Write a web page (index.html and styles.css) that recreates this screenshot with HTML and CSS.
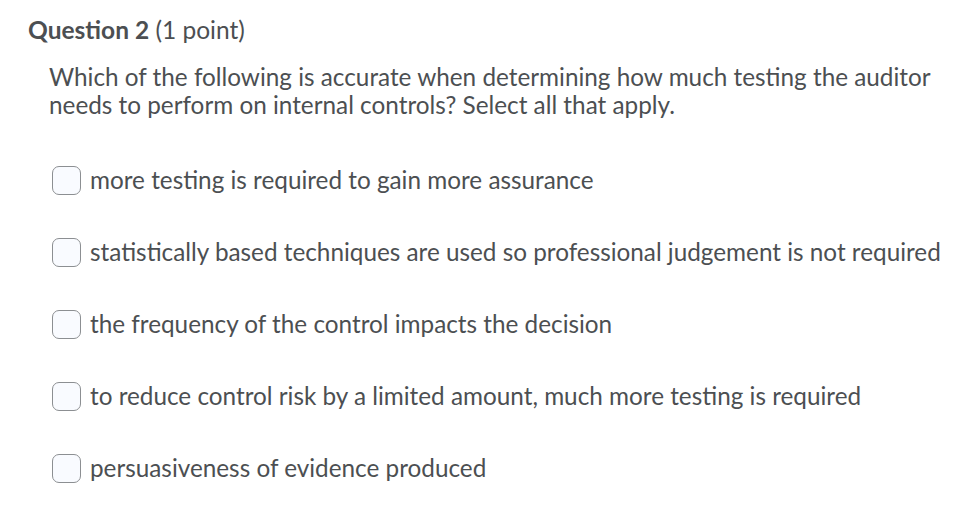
FILE: index.html
```html
<!DOCTYPE html>
<html lang="en">
<head>
  <meta charset="UTF-8" />
  <title>Question 2</title>
  <link rel="stylesheet" href="styles.css">
</head>
<body>
  <div class="question">
    <h2 class="question-title"><strong>Question 2</strong> (1 point)</h2>
    <div class="question-body">
      <p class="question-text">Which of the following is accurate when determining how much testing the auditor needs to perform on internal controls? Select all that apply.</p>
      <ul class="choices">
        <li><label><input type="checkbox" /><span>more testing is required to gain more assurance</span></label></li>
        <li><label><input type="checkbox" /><span>statistically based techniques are used so professional judgement is not required</span></label></li>
        <li><label><input type="checkbox" /><span>the frequency of the control impacts the decision</span></label></li>
        <li><label><input type="checkbox" /><span>to reduce control risk by a limited amount, much more testing is required</span></label></li>
        <li><label><input type="checkbox" /><span>persuasiveness of evidence produced</span></label></li>
      </ul>
    </div>
  </div>
</body>
</html>
```

FILE: styles.css
```css
* {
  box-sizing: border-box;
  margin: 0;
  padding: 0;
}

body {
  font-family: Lato, "Open Sans", sans-serif;
  color: #4c4f52;
  background-color: #fff;
}

.question {
  padding: 15px 0 0 28px;
}

.question-title {
  font-size: 24.5px;
  font-weight: normal;
  line-height: 30px;
}

.question-title strong {
  font-weight: bold;
}

.question-body {
  padding: 18px 0 0 21px;
}

.question-text {
  font-size: 24.3px;
  line-height: 28px;
  max-width: 900px;
}

.choices {
  list-style: none;
  padding: 46px 0 0 3px;
}

.choices li {
  height: 72px;
}

.choices label {
  display: flex;
  align-items: center;
  gap: 9px;
  font-size: 24.3px;
  line-height: 30px;
}

.choices input[type=checkbox] {
  appearance: none;
  width: 29px;
  height: 29px;
  border: 1px solid #8c8f92;
  border-radius: 7px;
  background-color: #f9fbff;
  flex-shrink: 0;
}
```
